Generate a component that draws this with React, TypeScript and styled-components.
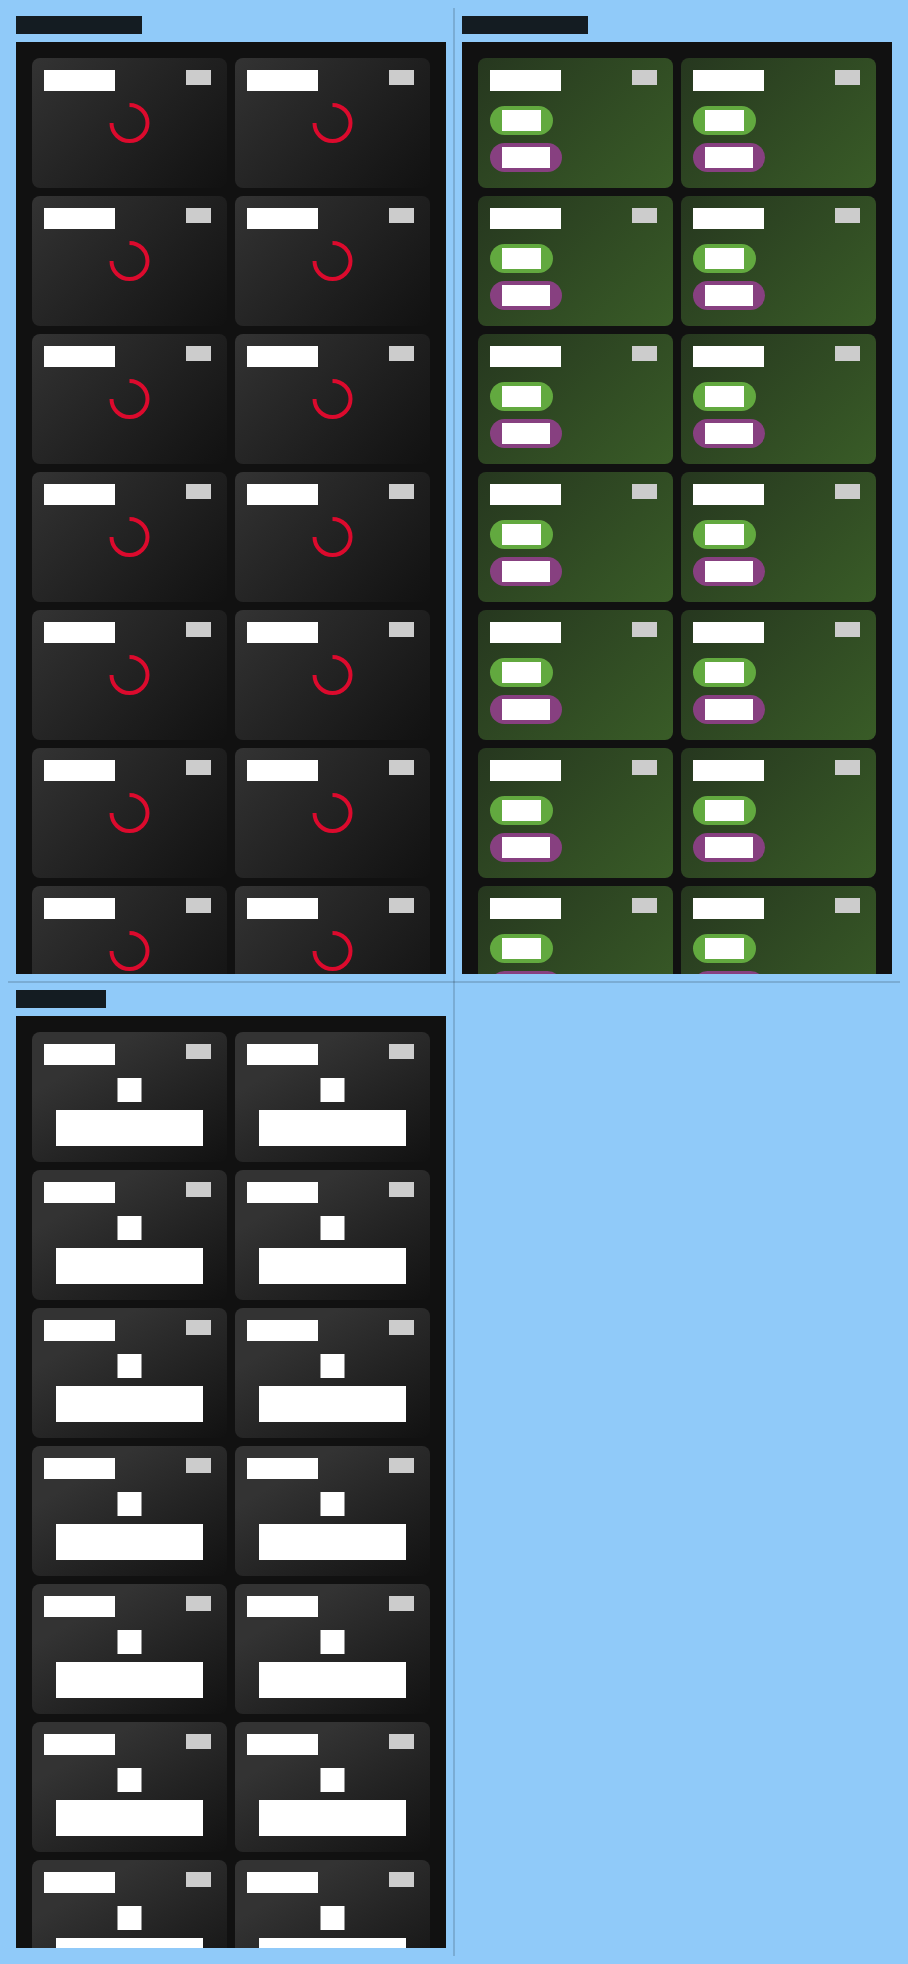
import React from "react";
import styled, { createGlobalStyle } from "styled-components";

const GlobalStyle = createGlobalStyle`
  * { box-sizing: border-box; }
  body { margin: 0; background: #90caf9; font-family: Roboto, "Liberation Sans", sans-serif; }
`;

const Page = styled.main`
  position: relative;
  display: grid;
  grid-template-columns: repeat(2, minmax(0, 1fr));
  margin: 8px;
`;

const Divider = styled.div<{ $vertical?: boolean }>`
  position: absolute;
  background: rgba(0, 0, 0, 0.15);
  ${({ $vertical }) =>
    $vertical
      ? "top: 0; bottom: 0; left: 50%; width: 2px; margin-left: -1px;"
      : "left: 0; right: 0; top: 50%; height: 2px; margin-top: -1px;"}
`;

const Variant = styled.section`
  display: flex;
  flex-direction: column;
  gap: 8px;
  padding: 8px;
`;

const VariantLabel = styled.div<{ $width: number }>`
  width: ${({ $width }) => $width}px;
  height: 18px;
  background: #141c22;
`;

const Screen = styled.div`
  display: grid;
  grid-template-columns: repeat(2, minmax(0, 1fr));
  grid-auto-rows: 130px;
  gap: 8px;
  height: 932px;
  padding: 16px;
  overflow: hidden;
  background: #111;
`;

const backgrounds = {
  loading: "linear-gradient(135deg, #333, #111)",
  success: "linear-gradient(135deg, #26371f, #395c27)",
  error: "linear-gradient(150deg, #333 25%, #111)",
};

type Kind = keyof typeof backgrounds;

const Card = styled.article<{ $kind: Kind }>`
  display: flex;
  flex-direction: column;
  padding: 12px;
  border-radius: 8px;
  background: ${({ $kind }) => backgrounds[$kind]};
`;

const CardHeader = styled.header`
  display: flex;
  justify-content: space-between;
  align-items: flex-start;
  padding-right: 4px;
`;

const Name = styled.div`
  width: 71px;
  height: 21px;
  background: #fff;
`;

const Index = styled.div`
  width: 25px;
  height: 15px;
  background: #ccc;
`;

const Spinner = styled.svg`
  display: block;
  width: 100%;
  height: 40px;
  margin-top: 12px;
`;

const Types = styled.div`
  display: flex;
  flex-direction: column;
  align-items: flex-start;
  gap: 8px;
  margin-top: 15px;
`;

const Pill = styled.div<{ $color: string }>`
  padding: 4px 12px;
  border-radius: 16px;
  background: ${({ $color }) => $color};
`;

const PillText = styled.div<{ $width: number }>`
  width: ${({ $width }) => $width}px;
  height: 21px;
  background: #fff;
`;

const Failure = styled.div`
  display: flex;
  flex-direction: column;
  gap: 8px;
  margin-top: 13px;
  padding: 0 12px;
`;

const FailureIcon = styled.svg`
  display: block;
  width: 100%;
  height: 24px;
`;

const FailureText = styled.div`
  height: 36px;
  background: #fff;
`;

function CardBody({ kind }: { kind: Kind }) {
  if (kind === "loading") {
    return (
      <Spinner viewBox="0 0 40 40" role="img" aria-label="Loading">
        <path d="M20 2A18 18 0 1 1 2 20" fill="none" stroke="#dc0a2d" strokeWidth="4" />
      </Spinner>
    );
  }
  if (kind === "success") {
    return (
      <Types>
        <Pill $color="#62a93f"><PillText $width={39} /></Pill>
        <Pill $color="#874080"><PillText $width={48} /></Pill>
      </Types>
    );
  }
  return (
    <Failure>
      <FailureIcon viewBox="0 0 24 24" aria-hidden="true">
        <rect width="24" height="24" fill="#fff" />
      </FailureIcon>
      <FailureText />
    </Failure>
  );
}

const variants: { kind: Kind; labelWidth: number }[] = [
  { kind: "loading", labelWidth: 126 },
  { kind: "success", labelWidth: 126 },
  { kind: "error", labelWidth: 90 },
];

const cards = Array.from({ length: 14 }, (_, i) => i);

export default function App() {
  return (
    <>
      <GlobalStyle />
      <Page>
        {variants.map(({ kind, labelWidth }) => (
          <Variant key={kind}>
            <VariantLabel $width={labelWidth} />
            <Screen>
              {cards.map((i) => (
                <Card key={i} $kind={kind}>
                  <CardHeader>
                    <Name />
                    <Index />
                  </CardHeader>
                  <CardBody kind={kind} />
                </Card>
              ))}
            </Screen>
          </Variant>
        ))}
        <Divider $vertical />
        <Divider />
      </Page>
    </>
  );
}
